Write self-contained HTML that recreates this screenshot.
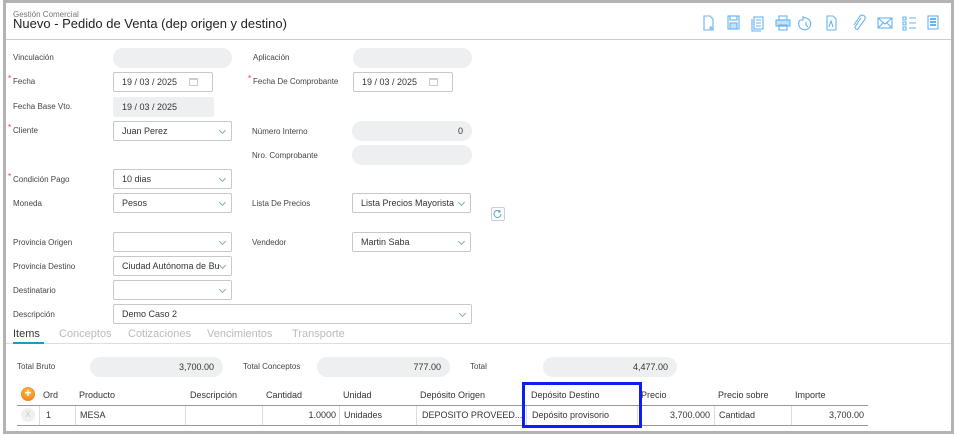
<!DOCTYPE html>
<html><head><meta charset="utf-8"><style>
*{box-sizing:border-box;margin:0;padding:0}
body{width:956px;height:436px;background:#fff;font-family:"Liberation Sans",sans-serif;position:relative;overflow:hidden;color:#333}
.frame{position:absolute;left:3px;top:0;width:951px;height:434px;border:3px solid #b3b3b3;border-left-width:3px}
.a{position:absolute}
.lbl{position:absolute;font-size:8px;color:#444;line-height:10px}
.req:before{content:"*";color:#e33;position:absolute;left:-5px;top:-3px;font-size:8px}
.ro{position:absolute;background:#eeeff0;border-radius:10px;height:20px;font-size:9px;line-height:20px;padding:0 9px;color:#333}
.in{position:absolute;border:1px solid #c8c8c8;border-radius:2px;height:20px;font-size:9px;line-height:18px;padding:0 8px;color:#333;background:#fff;white-space:nowrap;overflow:hidden}
.sel:after{content:"";position:absolute;right:6px;top:6px;width:4px;height:4px;border-right:1px solid #8aa;border-bottom:1px solid #8aa;transform:rotate(45deg)}
.cal{position:absolute;right:14px;top:5px;width:9px;height:8px;border:1px solid #ccc;border-top-width:2px}
.th{position:absolute;top:390px;font-size:9px;color:#333}
.td{position:absolute;top:410px;font-size:9px;color:#333}
.vl{position:absolute;top:406px;height:19px;width:1px;background:#ddd}
.tab{position:absolute;top:328px;font-size:11px;color:#bbb}
</style></head><body>
<div class="frame"></div>
<div class="a" style="left:13px;top:10px;font-size:8px;color:#777">Gestión Comercial</div>
<div class="a" style="left:13px;top:16px;font-size:13px;color:#222">Nuevo - Pedido de Venta (dep origen y destino)</div>
<div class="a" style="left:6px;top:39px;width:945px;height:1px;background:#ccc"></div>

<svg class="a" style="left:700px;top:14px" width="240" height="18" fill="none" stroke="#66b3f2" stroke-width="1.1">
<path d="M4 2h6l3 3v11H4z M11 12v4 M9 14h4"/>
<rect x="28" y="2" width="11" height="13"/><rect x="30" y="2" width="7" height="4"/><rect x="30" y="9" width="7" height="6" fill="#66b3f2" fill-opacity=".4"/>
<rect x="54" y="3" width="9" height="12"/><path d="M52 5v12h9 M56 6h5M56 9h5M56 12h5"/>
<rect x="76" y="6" width="14" height="6" fill="#66b3f2" fill-opacity=".4"/><rect x="79" y="2" width="8" height="4"/><rect x="79" y="11" width="8" height="5"/>
<path d="M103 4a6 6 0 1 1-3 2 M103 2v4h-3 M106 8v3l2 2"/>
<path d="M127 2h6l3 3v11h-9z M129 13l2-6 2 6"/>
<path d="M161 4l-6 9a2 2 0 0 0 3 2l7-10a3 3 0 0 0-5-3l-6 9"/>
<rect x="178" y="4" width="14" height="10"/><path d="M178 4l7 6 7-6 M178 14l5-5 M192 14l-5-5"/>
<path d="M203 3h3v3h-3z M203 8h3v3h-3z M203 13h3v3h-3z M209 4h7 M209 9h7 M209 14h7"/>
<rect x="228" y="2" width="10" height="13"/><path d="M230 5h6M230 8h6M230 11h6" stroke-width="2"/>
</svg>

<div class="lbl" style="left:13px;top:53px">Vinculación</div><div class="ro" style="left:113px;top:48px;width:119px"></div>
<div class="lbl" style="left:253px;top:53px">Aplicación</div><div class="ro" style="left:353px;top:48px;width:119px"></div>

<div class="lbl req" style="left:13px;top:77px">Fecha</div><div class="in" style="left:113px;top:72px;width:100px">19 / 03 / 2025<span class="cal"></span></div>
<div class="lbl req" style="left:253px;top:77px">Fecha De Comprobante</div><div class="in" style="left:353px;top:72px;width:100px">19 / 03 / 2025<span class="cal"></span></div>

<div class="lbl" style="left:13px;top:102px">Fecha Base Vto.</div><div class="ro" style="left:113px;top:97px;width:101px;border-radius:2px">19 / 03 / 2025</div>

<div class="lbl req" style="left:13px;top:126px">Cliente</div><div class="in sel" style="left:113px;top:121px;width:119px">Juan Perez</div>
<div class="lbl" style="left:252px;top:127px">Número Interno</div><div class="ro" style="left:352px;top:121px;width:120px;text-align:right">0</div>
<div class="lbl" style="left:252px;top:151px">Nro. Comprobante</div><div class="ro" style="left:352px;top:145px;width:120px"></div>

<div class="lbl req" style="left:13px;top:175px">Condición Pago</div><div class="in sel" style="left:113px;top:169px;width:119px">10 dias</div>
<div class="lbl" style="left:13px;top:199px">Moneda</div><div class="in sel" style="left:113px;top:193px;width:119px">Pesos</div>
<div class="lbl" style="left:252px;top:199px">Lista De Precios</div><div class="in sel" style="left:352px;top:193px;width:119px">Lista Precios Mayorista</div>
<div class="a" style="left:491px;top:207px;width:14px;height:14px;border:1px solid #ccd;border-radius:2px"></div>
<svg class="a" style="left:493px;top:209px" width="10" height="10" fill="none" stroke="#5ab" stroke-width="1"><path d="M8 5a3.5 3.5 0 1 1-1-2.5 M7 1v2h-2"/></svg>

<div class="lbl" style="left:13px;top:238px">Provincia Origen</div><div class="in sel" style="left:113px;top:232px;width:119px"></div>
<div class="lbl" style="left:252px;top:238px">Vendedor</div><div class="in sel" style="left:352px;top:232px;width:119px">Martin Saba</div>
<div class="lbl" style="left:13px;top:262px">Provincia Destino</div><div class="in sel" style="left:113px;top:256px;width:119px;padding-right:20px">Ciudad Autónoma de Bu</div>
<div class="lbl" style="left:13px;top:286px">Destinatario</div><div class="in sel" style="left:113px;top:280px;width:119px"></div>
<div class="lbl" style="left:13px;top:310px">Descripción</div><div class="in sel" style="left:113px;top:304px;width:359px">Demo Caso 2</div>

<div class="tab" style="left:13px;color:#333">Items</div>
<div class="tab" style="left:59px">Conceptos</div>
<div class="tab" style="left:128px">Cotizaciones</div>
<div class="tab" style="left:207px">Vencimientos</div>
<div class="tab" style="left:292px">Transporte</div>
<div class="a" style="left:6px;top:343px;width:945px;height:1px;background:#ddd"></div>
<div class="a" style="left:13px;top:342px;width:31px;height:2px;background:#1a9bbf"></div>

<div class="lbl" style="left:17px;top:362px">Total Bruto</div><div class="ro" style="left:90px;top:357px;width:133px;text-align:right">3,700.00</div>
<div class="lbl" style="left:243px;top:362px">Total Conceptos</div><div class="ro" style="left:317px;top:357px;width:133px;text-align:right">777.00</div>
<div class="lbl" style="left:470px;top:362px">Total</div><div class="ro" style="left:543px;top:357px;width:134px;text-align:right">4,477.00</div>

<div class="a" style="left:21px;top:387px;width:14px;height:14px;border-radius:50%;background:radial-gradient(circle at 50% 35%,#ffc040,#f07010);color:#fff;font-size:12px;line-height:13px;text-align:center;font-weight:bold">+</div>
<div class="th" style="left:43px">Ord</div><div class="th" style="left:79px">Producto</div><div class="th" style="left:190px">Descripción</div><div class="th" style="left:266px">Cantidad</div><div class="th" style="left:343px">Unidad</div><div class="th" style="left:420px">Depósito Origen</div><div class="th" style="left:531px">Depósito Destino</div><div class="th" style="left:641px">Precio</div><div class="th" style="left:718px">Precio sobre</div><div class="th" style="left:795px">Importe</div>
<div class="a" style="left:17px;top:405px;width:851px;height:1px;background:#999"></div>
<div class="a" style="left:17px;top:425px;width:851px;height:1px;background:#999"></div>
<div class="vl" style="left:39px"></div><div class="vl" style="left:75px"></div><div class="vl" style="left:185px"></div><div class="vl" style="left:262px"></div><div class="vl" style="left:339px"></div><div class="vl" style="left:416px"></div><div class="vl" style="left:526px"></div><div class="vl" style="left:637px"></div><div class="vl" style="left:714px"></div><div class="vl" style="left:791px"></div>
<div class="a" style="left:21px;top:408px;width:14px;height:14px;border-radius:50%;background:#f0f0f0;color:#ccc;font-size:8px;line-height:14px;text-align:center">X</div>
<div class="td" style="left:46px">1</div><div class="td" style="left:80px">MESA</div>
<div class="td" style="left:262px;width:74px;text-align:right">1.0000</div><div class="td" style="left:344px">Unidades</div>
<div class="td" style="left:422px">DEPOSITO PROVEED...</div><div class="td" style="left:532px">Depósito provisorio</div>
<div class="td" style="left:637px;width:73px;text-align:right">3,700.000</div><div class="td" style="left:719px">Cantidad</div>
<div class="td" style="left:791px;width:73px;text-align:right">3,700.00</div>
<div class="a" style="left:522px;top:382px;width:120px;height:46px;border:3px solid #0a1ff0"></div>
</body></html>
